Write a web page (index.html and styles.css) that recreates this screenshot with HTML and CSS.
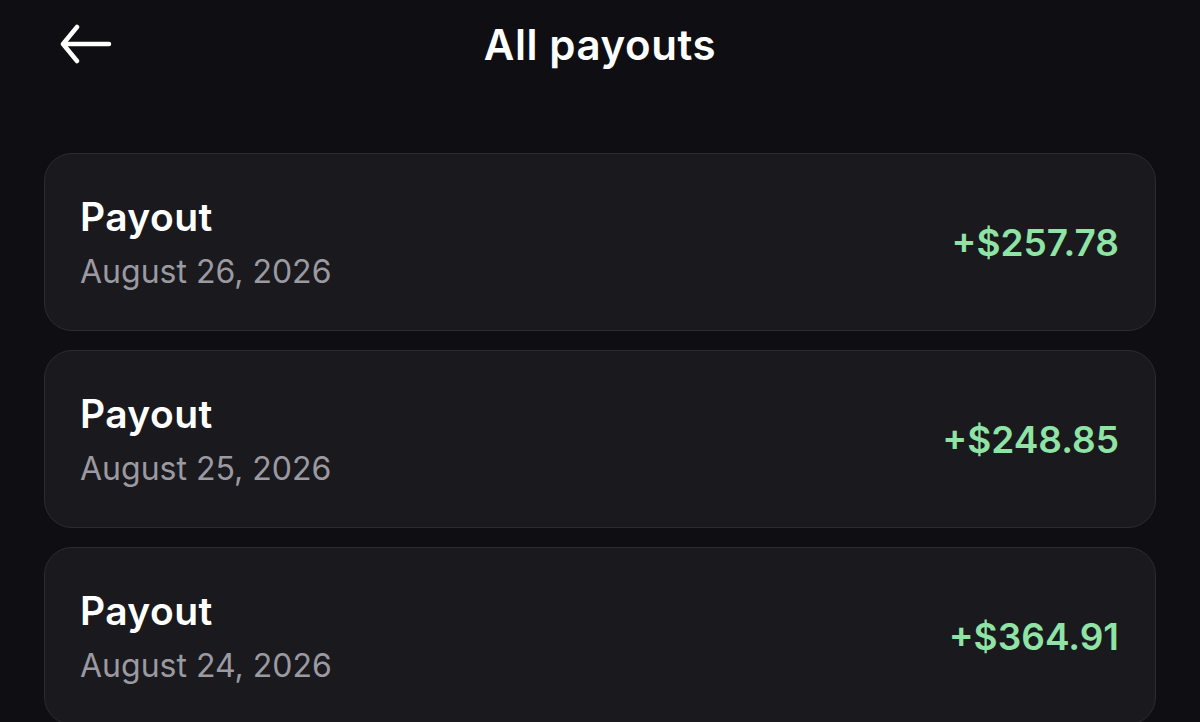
FILE: index.html
```html
<!DOCTYPE html>
<html lang="en">
<head>
    <meta charset="UTF-8">
    <meta name="viewport" content="width=device-width, initial-scale=1.0">
    <title>All payouts</title>
    <link rel="stylesheet" href="styles.css">
</head>
<body>
    <div class="header">
        <button class="back" aria-label="Back">
            <svg width="52" height="40" viewBox="0 0 52 40" fill="none" stroke="white" stroke-width="4.5" stroke-linecap="round" stroke-linejoin="round">
                <path d="M49 20H4"/>
                <path d="M17 3L3 20L17 37"/>
            </svg>
        </button>
        <h1>All payouts</h1>
    </div>

    <div class="list">
        <div class="card">
            <div class="info">
                <div class="label">Payout</div>
                <div class="date">August 26, 2026</div>
            </div>
            <div class="amount">+$257.78</div>
        </div>
        <div class="card">
            <div class="info">
                <div class="label">Payout</div>
                <div class="date">August 25, 2026</div>
            </div>
            <div class="amount">+$248.85</div>
        </div>
        <div class="card">
            <div class="info">
                <div class="label">Payout</div>
                <div class="date">August 24, 2026</div>
            </div>
            <div class="amount">+$364.91</div>
        </div>
    </div>
</body>
</html>
```

FILE: styles.css
```css
body {
    margin: 0;
    background-color: #0f0f13;
    color: white;
    font-family: Inter, "Liberation Sans", sans-serif;
    overflow: hidden;
}
.header {
    display: flex;
    align-items: center;
    justify-content: center;
    height: 88px;
    position: relative;
}
.header h1 {
    margin: 0;
    font-size: 42px;
    font-weight: 600;
    letter-spacing: 0.6px;
}
.back {
    position: absolute;
    left: 60px;
    top: 24px;
    background: none;
    border: none;
    padding: 0;
    cursor: pointer;
}
.list {
    display: flex;
    flex-direction: column;
    gap: 19px;
    padding: 65px 44px 0;
}
.card {
    display: flex;
    align-items: center;
    justify-content: space-between;
    height: 176px;
    padding: 0 36px 0 35px;
    background: #1a191e;
    border: 1px solid #2c2b31;
    border-radius: 28px;
}
.label {
    font-size: 39px;
    font-weight: 600;
    line-height: 46px;
    letter-spacing: 0.4px;
}
.date {
    margin-top: 13px;
    font-size: 32px;
    color: #9b9aa1;
    line-height: 38px;
}
.amount {
    font-size: 37px;
    font-weight: 600;
    color: #8fe3a5;
}
```
